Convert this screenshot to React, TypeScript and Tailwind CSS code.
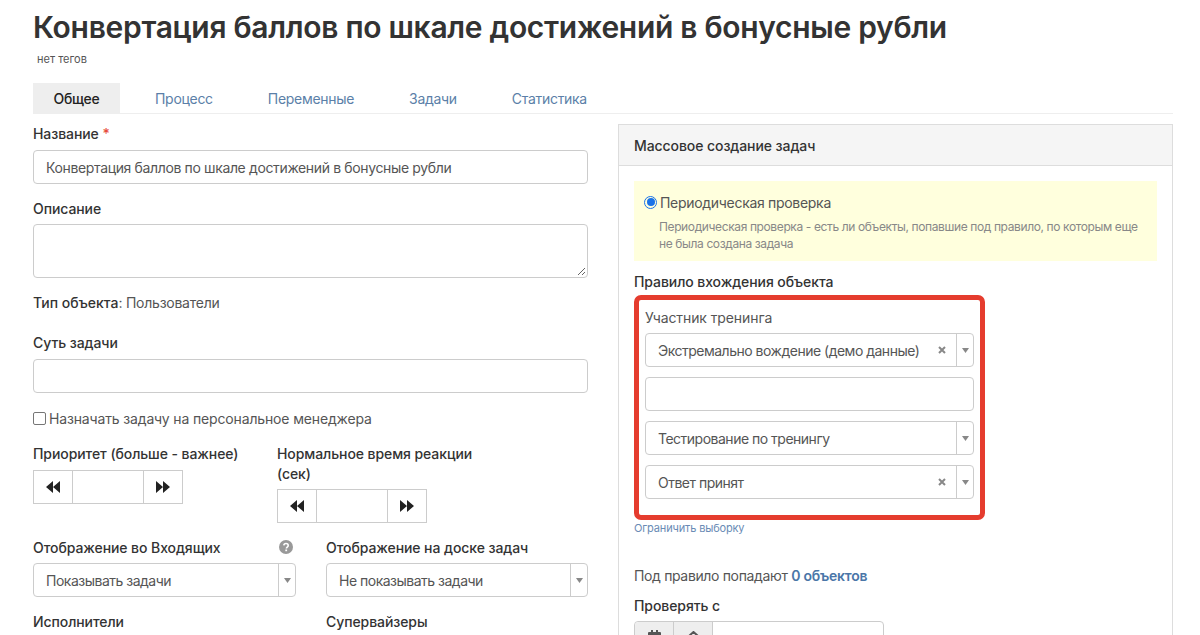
const rewind = (
  <svg width="14" height="12" viewBox="0 0 14 12" fill="#222">
    <path d="M7 0v12L0 6zM14 0v12L7 6z" />
  </svg>
);

const forward = (
  <svg width="14" height="12" viewBox="0 0 14 12" fill="#222">
    <path d="M0 0v12l7-6zM7 0v12l7-6z" />
  </svg>
);

function Label({ children, className = "" }: { children: React.ReactNode; className?: string }) {
  return <div className={`text-[14px] leading-[20px] font-medium tracking-[-0.08px] text-[#333] ${className}`}>{children}</div>;
}

function Input({ value = "", className = "" }: { value?: string; className?: string }) {
  return (
    <div className={`h-[34px] rounded-[4px] border border-[#ccc] px-3 text-[14px] leading-[34px] tracking-[-0.36px] text-[#555] ${className}`}>
      {value}
    </div>
  );
}

function Select({ value, clear = false, className = "" }: { value: string; clear?: boolean; className?: string }) {
  return (
    <div className={`flex h-[34px] items-center rounded-[4px] border border-[#ccc] text-[14px] tracking-[-0.5px] text-[#555] ${className}`}>
      <span className="min-w-0 flex-1 truncate pl-3">{value}</span>
      {clear && (
        <svg className="mr-[10px]" width="8" height="8" viewBox="0 0 8 8" stroke="#888" strokeWidth="2">
          <path d="M1 1l6 6M7 1L1 7" />
        </svg>
      )}
      <span className="flex h-full w-[17px] shrink-0 items-center justify-center border-l border-[#ccc]">
        <svg width="7" height="5" viewBox="0 0 7 5" fill="#888">
          <path d="M0 0h7L3.5 5z" />
        </svg>
      </span>
    </div>
  );
}

function Stepper({ className = "" }: { className?: string }) {
  return (
    <div className={`flex h-[34px] w-[150px] border border-[#ccc] ${className}`}>
      <span className="flex w-[39px] items-center justify-center border-r border-[#ccc]">{rewind}</span>
      <span className="flex-1" />
      <span className="flex w-[39px] items-center justify-center border-l border-[#ccc]">{forward}</span>
    </div>
  );
}

export default function App() {
  return (
    <div className="h-[635px] w-[1200px] overflow-hidden bg-white pl-[33px] font-['Inter','Noto_Sans',sans-serif] text-[#333]">
      <h1 className="pt-[9px] text-[30px] font-semibold leading-[36px] tracking-[-0.3px] whitespace-nowrap">
        Конвертация баллов по шкале достижений в бонусные рубли
      </h1>
      <div className="ml-[4px] mt-[7px] text-[11px] leading-[14px] text-[#555]">нет тегов</div>

      <div className="mt-[17px] flex h-[31px] w-[1140px] items-stretch border-b border-[#eee] text-[14px] tracking-[-0.3px] text-[#5b7fa8]">
        <span className="flex w-[87px] items-center justify-center bg-[#eee] font-medium text-[#222]">Общее</span>
        <span className="ml-[35px] flex items-center">Процесс</span>
        <span className="ml-[55px] flex items-center">Переменные</span>
        <span className="ml-[55px] flex items-center">Задачи</span>
        <span className="ml-[55px] flex items-center">Статистика</span>
      </div>

      <div className="flex items-start">
        <div className="w-[555px]">
          <Label className="mt-[10px]">
            Название <span className="text-[#e74c3c]">*</span>
          </Label>
          <Input className="mt-[6px] whitespace-nowrap" value="Конвертация баллов по шкале достижений в бонусные рубли" />

          <Label className="mt-[15px]">Описание</Label>
          <div className="relative mt-[5px] h-[54px] rounded-[4px] border border-[#ccc]">
            <svg className="absolute bottom-[1px] right-[1px]" width="9" height="9" viewBox="0 0 9 9" stroke="#666" fill="none">
              <path d="M1 8l7-7M5 8l3-3" />
            </svg>
          </div>

          <div className="mt-[15px] text-[14px] leading-[20px] text-[#555]">
            <span className="font-medium text-[#333]">Тип объекта</span>
            <span className="tracking-[-0.25px]">: Пользователи</span>
          </div>

          <Label className="mt-[20px]">Суть задачи</Label>
          <Input className="mt-[6px]" />

          <label className="mt-[15px] flex h-[20px] items-center text-[14px] tracking-[-0.15px] text-[#555]">
            <span className="h-[13px] w-[13px] rounded-[2px] border border-[#767676]" />
            <span className="ml-[3px]">Назначать задачу на персональное менеджера</span>
          </label>

          <div className="mt-[16px] flex">
            <div className="w-[244px]">
              <Label>Приоритет (больше - важнее)</Label>
              <Stepper className="mt-[6px]" />
            </div>
            <div className="w-[200px]">
              <Label>Нормальное время реакции (сек)</Label>
              <Stepper className="mt-[5px]" />
            </div>
          </div>

          <div className="mt-[15px] flex gap-[30px]">
            <div className="w-[263px]">
              <div className="flex justify-between pr-[3px]">
                <Label>Отображение во Входящих</Label>
                <svg className="mt-[2px]" width="14" height="14" viewBox="0 0 14 14">
                  <circle cx="7" cy="7" r="7" fill="#999" />
                  <path d="M4.8 5.4C4.9 4.2 5.8 3.5 7 3.5s2.2.8 2.2 1.9c0 1.7-1.8 1.6-1.8 3" fill="none" stroke="#fff" strokeWidth="1.6" />
                  <rect x="6.3" y="9.5" width="1.8" height="1.7" fill="#fff" />
                </svg>
              </div>
              <Select className="mt-[5px]" value="Показывать задачи" />
              <Label className="mt-[15px]">Исполнители</Label>
            </div>
            <div className="w-[262px]">
              <Label>Отображение на доске задач</Label>
              <Select className="mt-[5px]" value="Не показывать задачи" />
              <Label className="mt-[15px]">Супервайзеры</Label>
            </div>
          </div>
        </div>

        <div className="ml-[30px] mt-[10px] h-[530px] w-[555px] shrink-0 border border-[#ddd]">
          <div className="flex h-[41px] items-center border-b border-[#ddd] bg-[#f5f5f5] pl-[15px] text-[14px] font-medium tracking-[-0.08px]">
            Массовое создание задач
          </div>
          <div className="px-[15px] pt-[15px]">
            <div className="h-[80px] bg-[#ffffdd] pl-[10px] pr-[10px] pt-[11px]">
              <div className="flex h-[20px] items-center text-[14px] tracking-[-0.3px] text-[#555]">
                <span className="flex h-[13px] w-[13px] items-center justify-center rounded-full border-[1.5px] border-[#1a73e8]">
                  <span className="h-[8px] w-[8px] rounded-full bg-[#1a73e8]" />
                </span>
                <span className="ml-[3px]">Периодическая проверка</span>
              </div>
              <p className="ml-[15px] mt-[6px] text-[12px] leading-[17px] tracking-[-0.38px] text-[#888]">
                Периодическая проверка - есть ли объекты, попавшие под правило, по которым еще не была создана задача
              </p>
            </div>

            <Label className="mt-[11px]">Правило вхождения объекта</Label>

            <div className="mt-[3px] w-[351px] rounded-[7px] border-[5px] border-[#e53c2e] px-[6px] pt-[8px]">
              <div className="text-[14px] leading-[20px] tracking-[-0.1px] text-[#555]">Участник тренинга</div>
              <Select className="mt-[5px]" clear value="Экстремально вождение (демо данные)" />
              <Input className="mt-[10px]" />
              <Select className="mt-[10px]" value="Тестирование по тренингу" />
              <Select className="mb-[16px] mt-[10px]" clear value="Ответ принят" />
            </div>

            <div className="mt-[1px] text-[11px] leading-[14px] tracking-[-0.15px] text-[#6a8bb5]">Ограничить выборку</div>

            <div className="mt-[31px] text-[14px] leading-[20px] tracking-[-0.35px] text-[#555]">
              Под правило попадают <span className="font-semibold tracking-[-0.25px] text-[#4a76a8]">0 объектов</span>
            </div>

            <Label className="mt-[10px]">Проверять с</Label>

            <div className="mt-[5px] flex h-[34px] w-[250px] rounded-[4px] border border-[#ccc]">
              <span className="flex w-[39px] items-start justify-center rounded-l-[4px] border-r border-[#ccc] bg-[#eee] pt-[8px]">
                <svg width="13" height="13" viewBox="0 0 13 13" fill="#555">
                  <path d="M0 3a1 1 0 011-1h11a1 1 0 011 1v10H0zM3 0h2v2H3zM8 0h2v2H8z" />
                </svg>
              </span>
              <span className="flex w-[39px] items-start justify-center border-r border-[#ccc] bg-[#eee] pt-[9px]">
                <svg width="11" height="9" viewBox="0 0 11 9" fill="none" stroke="#555" strokeWidth="2">
                  <path d="M1 5l4.5-4L10 5" />
                </svg>
              </span>
              <span className="flex-1" />
            </div>
          </div>
        </div>
      </div>
    </div>
  );
}
